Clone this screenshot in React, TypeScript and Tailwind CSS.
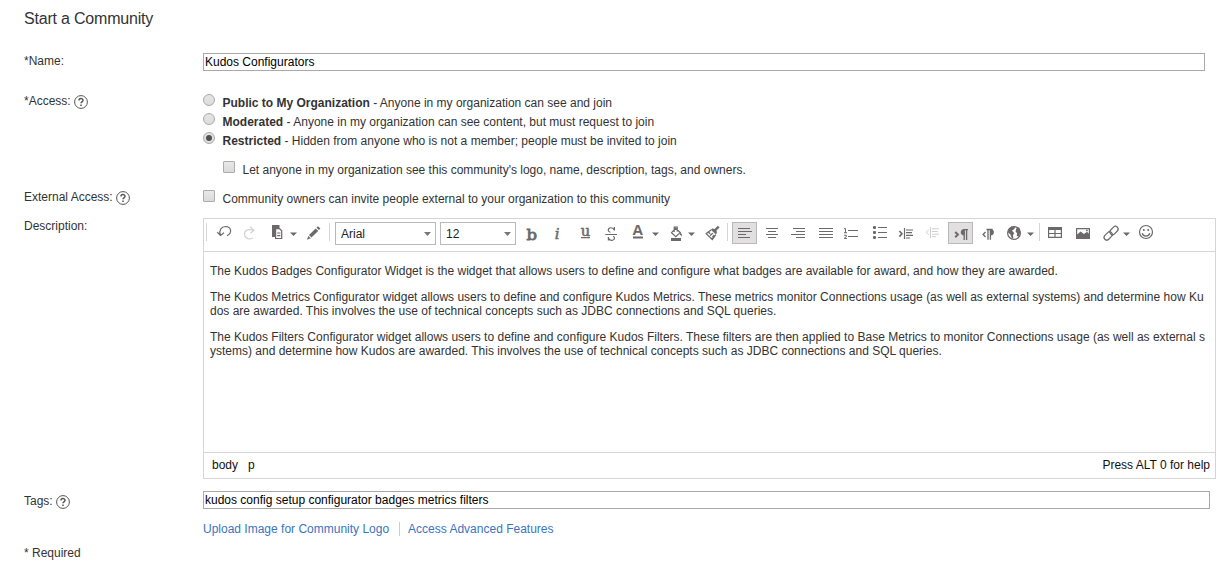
import React from "react";

const INK = "#6b6969";

function Tool({ x, w, active, children, color = INK }: { x: number; w: number; active?: boolean; children?: React.ReactNode; color?: string }) {
  return (
    <svg width={w} height={32} viewBox={`${x} 4 ${w} 32`} className="block shrink-0" fill="none" stroke={color} strokeWidth={1.2}>
      {active && <rect x={732.5} y={7.5} width={24} height={21} fill="#e1dfe0" stroke="#b9b9b9" strokeWidth={1} />}
      {children}
    </svg>
  );
}

const Caret = ({ x }: { x: number }) => <path d={`M${x} 17.5h7l-3.5 3.5z`} fill={INK} stroke="none" />;
const Sep = ({ x }: { x: number }) => <path d={`M${x + 0.5} 8v18`} stroke="#d5d5d5" strokeWidth={1} />;

function Bars({ rows }: { rows: number[][] }) {
  return (
    <g fill={INK} stroke="none" shapeRendering="crispEdges">
      {rows.map(([x, y, w]) => (
        <rect key={`${x}-${y}`} x={x} y={y} width={w} height={1} />
      ))}
    </g>
  );
}

function Select({ value, className }: { value: string; className: string }) {
  return (
    <div className={`mt-[3px] flex h-[23px] shrink-0 items-center justify-between border border-[#b9b9b9] pl-[5px] pr-1 text-xs text-[#222] ${className}`}>
      <span>{value}</span>
      <svg width="7" height="4" viewBox="0 0 7 4"><path d="M0 0h7L3.5 4z" fill="#777" /></svg>
    </div>
  );
}

function Toolbar() {
  return (
    <div className="flex h-[33px] shrink-0 items-start border-b border-[#d5d5d5]">
      <Tool x={204} w={36}>
        <Sep x={206} />
        <path d="M220.3 20C218.8 15 221.5 11.5 225.5 11.5C231.5 11.8 232.5 18 227 20.7M217.3 17.2L220.4 20.5L224 17.8" />
      </Tool>
      <Tool x={240} w={28} color="#d2d2d2">
        <path d="M253.7 15.2C248 13.5 244.3 15.5 244.5 19C244.7 23.5 249 25 253 23M250.2 11.6L253.8 15.2L250.5 18.2" />
      </Tool>
      <Tool x={268} w={67}>
        <path d="M272 10h7.5v3H275v9h-3z" fill={INK} stroke="none" />
        <path d="M275.6 13.6h3.9l2.2 2.2v7.7h-6.1z" fill="#fff" />
        <path d="M277.2 18h3.2M277.2 20.6h3.2" />
        <Caret x={290} />
        <path d="M309 20l6.7-6.6 2.5 2.5-6.8 6.6zM316.5 12.7l1.5-1.4 2.4 2.3-1.5 1.5zM308.3 21l2.5 2.3-3.8 1.5z" fill={INK} stroke="none" />
        <Sep x={329} />
      </Tool>
      <Select value="Arial" className="w-[101px]" />
      <div className="w-1 shrink-0" />
      <Select value="12" className="w-[76px]" />
      <Tool x={516} w={216}>
        <g fill={INK} stroke="none" className="font-['DejaVu_Serif',serif]">
          <text x="526.5" y="24.5" fontSize="15" stroke={INK} strokeWidth="0.8" textLength="10.5" lengthAdjust="spacingAndGlyphs">b</text>
          <text x="554.7" y="24" fontSize="15" fontStyle="italic" stroke={INK} strokeWidth="0.5">i</text>
          <text x="580.7" y="20.8" fontSize="14" stroke={INK} strokeWidth="0.5" textLength="9.5" lengthAdjust="spacingAndGlyphs">u</text>
          <text x="632.3" y="20.3" fontSize="14.5" fontWeight="bold" className="font-['Liberation_Sans',sans-serif]" textLength="11" lengthAdjust="spacingAndGlyphs">A</text>
        </g>
        <path d="M581 22.7h9M605.3 19.5h11.7M614.4 12v3.5M608.4 22v3.5M614.2 15C613 11.8 608 12 608.3 15.5C608.4 16.8 609.5 17 610.5 17.3M608.5 23C609.5 26.3 614.7 26 614.5 22.8C614.4 22 613.8 21.5 613.2 21.2" />
        <path d="M633 22.5h10" strokeWidth="2" />
        <Caret x={652} />
        <path d="M671 23h10v3h-10z" fill={INK} stroke="none" />
        <path d="M675.7 13.2l4.5 4.4-4.4 4-4.3-4zM674.2 17v-5h3v4.5" />
        <path d="M680 17l1.8 2.5v2l-2-2z" fill={INK} stroke="none" />
        <Caret x={688} />
        <path d="M712.2 13.8l2.5.5 3.2-3.2 1.3 1.3-3 3 .5 2.6-1 1-4.5-4.3z" fill={INK} strokeWidth="0.6" />
        <path d="M711 15l-4.8 3.6 6.1 5.9 3.4-4.8M708.4 17l1.7 1.8M710.1 20.6l2.7-2.3M712.3 22.4l1.9-2.2" strokeWidth="1.3" />
        <Sep x={727} />
      </Tool>
      <Tool x={732} w={28} active>
        <Bars rows={[[738, 13, 12], [738, 16, 14], [738, 19, 8], [738, 22, 12]]} />
      </Tool>
      <Tool x={760} w={184}>
        <Bars rows={[
          [766, 13, 12], [768, 16, 8], [766, 19, 12], [768, 22, 8],
          [793, 13, 12], [796, 16, 9], [791, 19, 14], [796, 22, 9],
          [819, 13, 14], [819, 16, 14], [819, 19, 14], [819, 22, 14],
          [848, 15, 10], [848, 21, 10], [878, 12, 9], [878, 17, 9], [878, 22, 9],
        ]} />
        <path d="M844 13.6h1.5v4.2M844 17.7h3M844 20.2h2.3v1.4L844.2 23.4h2.8" strokeWidth="1" />
        <g fill={INK} stroke="none">
          <rect x="873" y="11" width="3" height="3" rx="1" /><rect x="873" y="16" width="3" height="3" rx="1" /><rect x="873" y="21" width="3" height="3" rx="1" />
        </g>
        <path d="M899.4 16l2.5 2.8-2.5 2.8" strokeWidth="1.7" />
        <path d="M904.5 13v11M906 15h7M906 17.6h6M906 20.3h7M906 23h4" strokeWidth="1.2" />
        <g stroke="#cfcfcf">
          <path d="M928.8 14.5l-2.7 2.6 2.7 2.6M930.5 12v11M932 13.8h7M932 16.5h6M932 19.2h7M932 21.7h4" strokeWidth="1" />
        </g>
      </Tool>
      <Tool x={944} w={96}>
        <rect x="948.5" y="7.5" width="24" height="21" fill="#e1dfe0" stroke="#b9b9b9" strokeWidth="1" />
        <path d="M955.2 17l2.7 2.6-2.7 2.6" strokeWidth="2" />
        <path d="M963.5 14.6h4.5M964.2 15v10M966.6 15v10" strokeWidth="1.3" />
        <path d="M964.5 14c-5 0-5 6.5 0 6.5z" fill={INK} stroke="none" />
        <path d="M985.5 17l-2.4 2.5 2.4 2.5M986.5 14.5h6M988 14.5v10.3M990.4 14.5v10.3" strokeWidth="1.3" />
        <path d="M990.5 14c4.5 0 4.5 6.5 0 6.5z" fill={INK} stroke="none" />
        <circle cx="1014" cy="18" r="6.4" strokeWidth="1.2" />
        <path d="M1008.2 15l3.4-3.5 3.2.6-.3 2-2.6 1.5 2.3 2.5-1.3 2.4.5 2.6-1.5.5-1.5-4.2-2.4-2zM1016.2 13.5l3-1.2 1.2 4.8-1.4 4.5-2.3-.7.5-2.6-1.6-1.6z" fill={INK} stroke="none" />
        <Caret x={1027} />
        <Sep x={1039} />
      </Tool>
      <Tool x={1040} w={130}>
        <path d="M1048 12h14v3h-14z" fill={INK} stroke="none" />
        <path d="M1048.6 14v8.4h12.8V14M1055 15v7M1048.6 18.5h12.8" strokeWidth="1.2" />
        <path fillRule="evenodd" d="M1076 13h14v11h-14zM1077.2 14.2v5.3l3.4-3 3.3 2.4 3.2-2.1 1.7 2v-4.6z" fill={INK} stroke="none" />
        <circle cx="1086.9" cy="15.4" r="0.9" fill={INK} stroke="none" />
        <g strokeWidth="1.2">
          <rect x="1109.3" y="12.8" width="9.4" height="5.4" rx="2.7" transform="rotate(-45 1114 15.5)" />
          <rect x="1103.5" y="18.2" width="9.4" height="5.4" rx="2.7" transform="rotate(-45 1108.2 20.9)" />
        </g>
        <Caret x={1123} />
        <circle cx="1146" cy="17" r="6.5" />
        <path d="M1142.2 18.3c1.3 3.8 6.3 3.8 7.6 0" strokeWidth="1.2" />
        <circle cx="1143.8" cy="15" r="1" fill={INK} stroke="none" /><circle cx="1148.2" cy="15" r="1" fill={INK} stroke="none" />
      </Tool>
    </div>
  );
}

function Help() {
  return (
    <svg width="14" height="14" viewBox="0 0 14 14" className="mt-0.5 ml-[3px]" fill="none" stroke="#555">
      <circle cx="7" cy="7" r="6.4" strokeWidth="1" />
      <path d="M5 5.5C5 3 9 3 9 5.3C9 6.8 7 6.8 7 8.3M7 9.4v1.5" strokeWidth="1.5" />
    </svg>
  );
}

function Label({ text, help }: { text: string; help?: boolean }) {
  return (
    <div className="flex h-[15px] w-[179px] shrink-0 items-center whitespace-nowrap">
      <span>{text}</span>
      {help && <Help />}
    </div>
  );
}

const Radio = ({ checked }: { checked?: boolean }) => (
  <span className="-mt-[5px] flex size-3 shrink-0 items-center justify-center rounded-full border border-[#a9a9a9] bg-linear-to-b from-[#e5e5e5] to-[#dcdcdc]">
    {checked && <span className="size-1.5 rounded-full bg-[#505050]" />}
  </span>
);

const Check = () => <span className="-mt-[5px] size-3 shrink-0 rounded-[1px] border border-[#acacac] bg-linear-to-b from-[#e8e8e8] to-[#dadada]" />;

function Option({ title, text, checked }: { title: string; text: string; checked?: boolean }) {
  return (
    <div className="flex h-[19px] items-center gap-[7.5px] whitespace-nowrap">
      <Radio checked={checked} />
      <span><b>{title}</b> - {text}</span>
    </div>
  );
}

export default function App() {
  return (
    <div className="flex h-[562px] w-[1226px] flex-col overflow-hidden bg-white pl-6 font-['Liberation_Sans',Arial,sans-serif] text-xs leading-[14px] text-[#333]">
      <h1 className="h-[53px] shrink-0 pt-[9px] text-base leading-5 tracking-[-0.2px]">Start a Community</h1>
      <div className="flex h-[40px] shrink-0">
        <Label text="*Name:" />
        <div className="flex h-[18px] w-[1002px] items-center border border-[#a9a9a9] pl-px text-black">Kudos Configurators</div>
      </div>
      <div className="flex h-[96px] shrink-0">
        <Label text="*Access:" help />
        <div>
          <Option title="Public to My Organization" text="Anyone in my organization can see and join" />
          <Option title="Moderated" text="Anyone in my organization can see content, but must request to join" />
          <Option title="Restricted" text="Hidden from anyone who is not a member; people must be invited to join" checked />
          <div className="mt-[10px] flex h-[19px] items-center gap-[7.5px] pl-5">
            <Check />
            <span>Let anyone in my organization see this community's logo, name, description, tags, and owners.</span>
          </div>
        </div>
      </div>
      <div className="flex h-[29px] shrink-0">
        <Label text="External Access:" help />
        <div className="flex h-[19px] items-center gap-[7.5px]">
          <Check />
          <span>Community owners can invite people external to your organization to this community</span>
        </div>
      </div>
      <div className="flex h-[273px] shrink-0">
        <Label text="Description:" />
        <div className="flex h-[261px] w-[1013px] shrink-0 flex-col border border-[#d5d5d5]">
          <Toolbar />
          <div className="flex grow flex-col gap-3 whitespace-nowrap pl-1.5 pt-3">
            <p>The Kudos Badges Configurator Widget is the widget that allows users to define and configure what badges are available for award, and how they are awarded.</p>
            <p>The Kudos Metrics Configurator widget allows users to define and configure Kudos Metrics. These metrics monitor Connections usage (as well as external systems) and determine how Ku<br />dos are awarded. This involves the use of technical concepts such as JDBC connections and SQL queries.</p>
            <p>The Kudos Filters Configurator widget allows users to define and configure Kudos Filters. These filters are then applied to Base Metrics to monitor Connections usage (as well as external s<br />ystems) and determine how Kudos are awarded. This involves the use of technical concepts such as JDBC connections and SQL queries.</p>
          </div>
          <div className="flex h-[26px] shrink-0 items-center border-t border-[#d5d5d5] pb-[2px] pl-2 pr-[5px] text-[#111]">
            <span>body</span>
            <span className="ml-[10px]">p</span>
            <span className="ml-auto">Press ALT 0 for help</span>
          </div>
        </div>
      </div>
      <div className="flex h-[31px] shrink-0">
        <div className="pt-0.5"><Label text="Tags:" help /></div>
        <div className="flex h-[18px] w-[1007px] items-center border border-[#a9a9a9] pl-px text-black">kudos config setup configurator badges metrics filters</div>
      </div>
      <div className="flex h-[24px] shrink-0 pl-[179px] text-[#3a74c2]">
        <a className="pr-[10px]">Upload Image for Community Logo</a>
        <a className="h-[14px] border-l border-[#ccc] pl-2">Access Advanced Features</a>
      </div>
      <div>* Required</div>
    </div>
  );
}
